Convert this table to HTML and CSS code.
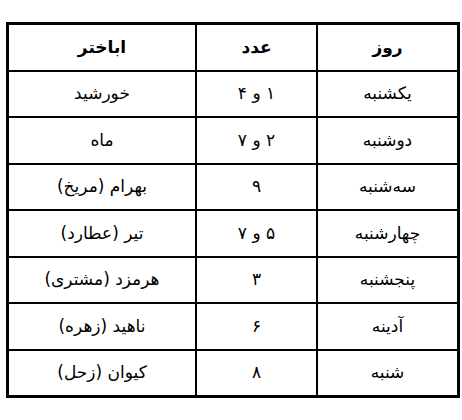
FILE: index.html
```html
<!DOCTYPE html>
<html lang="fa" dir="rtl">
<head>
<meta charset="utf-8">
<link rel="stylesheet" href="styles.css">
</head>
<body>
<div class="wrap">
<table class="grid">
<thead>
<tr><th class="c-day">روز</th><th class="c-num">عدد</th><th class="c-planet">اباختر</th></tr>
</thead>
<tbody>
<tr><td>یکشنبه</td><td>۱ و ۴</td><td>خورشید</td></tr>
<tr><td>دوشنبه</td><td>۲ و ۷</td><td>ماه</td></tr>
<tr><td>سه‌شنبه</td><td>۹</td><td>بهرام (مریخ)</td></tr>
<tr><td>چهارشنبه</td><td>۵ و ۷</td><td>تیر (عطارد)</td></tr>
<tr><td>پنجشنبه</td><td>۳</td><td>هرمزد (مشتری)</td></tr>
<tr><td>آدینه</td><td>۶</td><td>ناهید (زهره)</td></tr>
<tr><td>شنبه</td><td>۸</td><td>کیوان (زحل)</td></tr>
</tbody>
</table>
</div>
</body>
</html>
```
FILE: styles.css
```css
html, body {
  margin: 0;
  padding: 0;
  background: #fff;
}
.wrap {
  direction: ltr;
  padding: 22px 0 0 6px;
}
.grid {
  direction: rtl;
  width: 454px;
  table-layout: fixed;
  border-collapse: separate;
  border-spacing: 0;
  border: 3px solid #000;
  font-family: "DejaVu Sans", sans-serif;
  color: #000;
}
.grid th, .grid td {
  height: 44.5px;
  padding: 0;
  text-align: center;
  vertical-align: middle;
  font-size: 17px;
  font-weight: normal;
  line-height: 1;
}
.grid th {
  font-size: 17px;
  font-weight: bold;
}
.grid tr > * + * {
  border-right: 2px solid #000;
}
.grid tbody td {
  border-top: 2px solid #000;
}
.c-day { width: 139px; }
.c-num { width: 119px; }
.c-planet { width: 186px; }
```
